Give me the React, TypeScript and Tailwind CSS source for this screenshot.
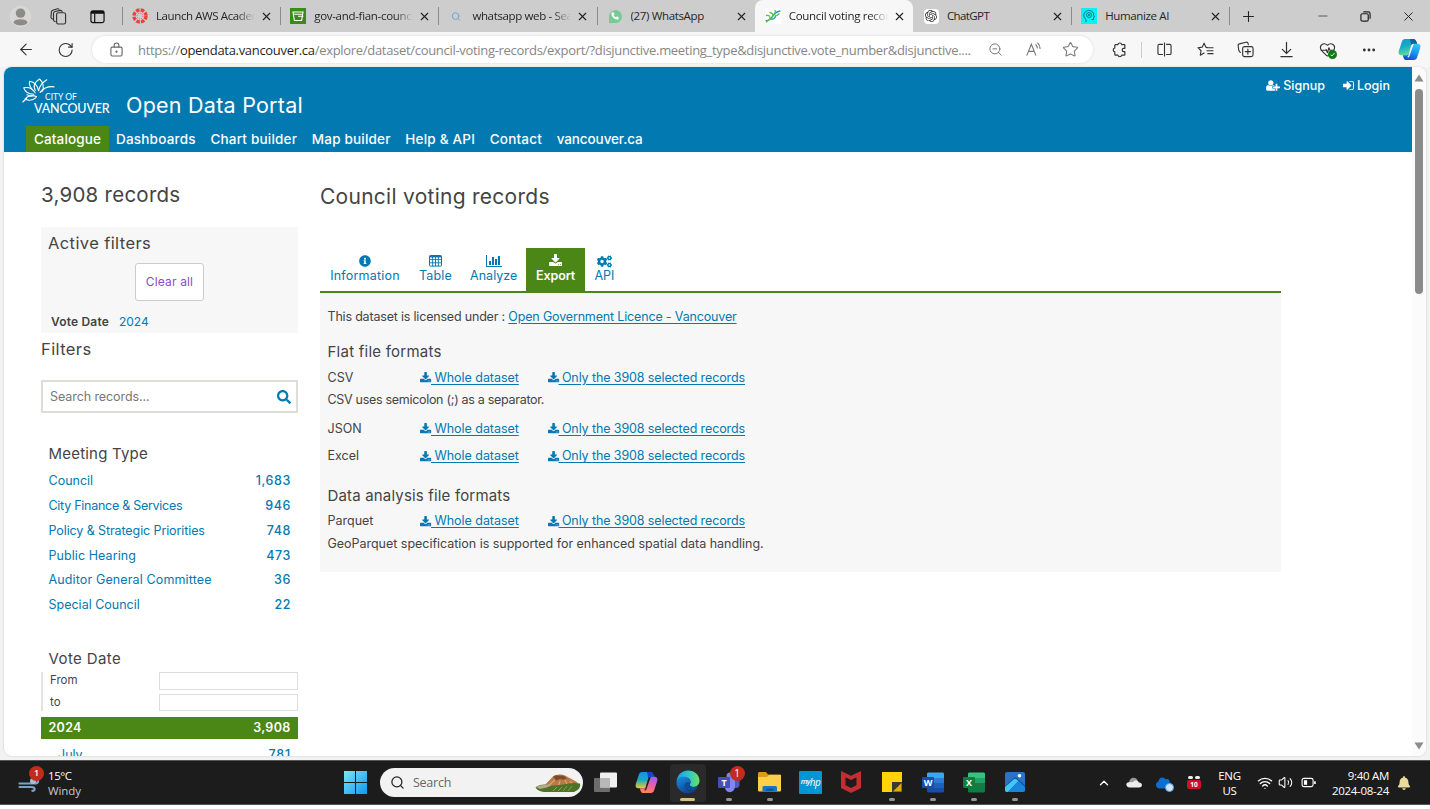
import React from "react";
import {
  ArrowLeft, RotateCw, X, Plus, Minus, ZoomOut, Star,
  Ellipsis, Search, Wifi, Volume2, ChevronUp, HeartPulse, Phone,
} from "lucide-react";
import { FaInfoCircle, FaCogs, FaSearch, FaBell, FaCloud } from "react-icons/fa";
import { SiOpenai } from "react-icons/si";

type Kids = { children?: React.ReactNode };

/* ---------- glyphs ---------- */

const DownloadGlyph = ({ className = "" }: { className?: string }) => (
  <svg viewBox="0 0 1792 1792" className={className} fill="currentColor">
    <path d="M1280 1344q0-26-19-45t-45-19-45 19-19 45 19 45 45 19 45-19 19-45zm256 0q0-26-19-45t-45-19-45 19-19 45 19 45 45 19 45-19 19-45zm128-224v320q0 40-28 68t-68 28h-1472q-40 0-68-28t-28-68v-320q0-40 28-68t68-28h465l135 136q58 56 136 56t136-56l136-136h464q40 0 68 28t28 68zm-325-569q17 41-14 70l-448 448q-18 19-45 19t-45-19l-448-448q-31-29-14-70 17-39 59-39h256v-448q0-26 19-45t45-19h256q26 0 45 19t19 45v448h256q42 0 59 39z" />
  </svg>
);
const UserPlusGlyph = () => (
  <svg viewBox="0 0 2048 1792" className="h-[13px] w-[14px]" fill="currentColor">
    <path d="M704 896q-159 0-271.5-112.5t-112.5-271.5 112.5-271.5 271.5-112.5 271.5 112.5 112.5 271.5-112.5 271.5-271.5 112.5zm960 128h352q13 0 22.5 9.5t9.5 22.5v192q0 13-9.5 22.5t-22.5 9.5h-352v352q0 13-9.5 22.5t-22.5 9.5h-192q-13 0-22.5-9.5t-9.5-22.5v-352h-352q-13 0-22.5-9.5t-9.5-22.5v-192q0-13 9.5-22.5t22.5-9.5h352v-352q0-13 9.5-22.5t22.5-9.5h192q13 0 22.5 9.5t9.5 22.5v352zm-736 224q0 52 38 90t90 38h256v238q-68 50-171 50h-874q-121 0-194-69t-73-190q0-53 3.5-103.5t14-109 26.5-108.5 43-97.5 62-81 85.5-53.5 111.5-20q19 0 39 17 79 61 154.5 91.5t164.5 30.5 164.5-30.5 154.5-91.5q20-17 39-17 132 0 217 96h-223q-52 0-90 38t-38 90v192z" />
  </svg>
);
const SignInGlyph = () => (
  <svg viewBox="0 128 1664 1536" className="h-[11px] w-[12px]" fill="currentColor">
    <path d="M1312 896q0 26-19 45l-544 544q-19 19-45 19t-45-19-19-45v-288h-448q-26 0-45-19t-19-45v-384q0-26 19-45t45-19h448v-288q0-26 19-45t45-19 45 19l544 544q19 19 19 45zm352-352v704q0 119-84.5 203.5t-203.5 84.5h-320q-13 0-22.5-9.5t-9.5-22.5q0-4-1-20t-.5-26.5 3-23.5 10-19.5 20.5-6.5h320q66 0 113-47t47-113v-704q0-66-47-113t-113-47h-312l-11.5-1-11.5-3-8-5.500-7-9-2-13.500q0-4-1-20t-.5-26.500 3-23.500 10-19.500 20.500-6.500h320q119 0 203.500 84.500t84.500 203.500z" />
  </svg>
);
const ChartGlyph = () => (
  <svg viewBox="0 0 2048 1792" className="h-[14px] w-[16px]" fill="currentColor">
    <path d="M640 896v512h-256v-512h256zm384-512v1024h-256v-1024h256zm1024 1152v128h-2048v-1536h128v1408h1920zm-640-896v768h-256v-768h256zm384-384v1152h-256v-1152h256z" />
  </svg>
);
const TableGlyph = () => (
  <svg viewBox="0 0 14 12" className="h-3 w-3.5" fill="none" stroke="currentColor">
    <rect x=".5" y=".5" width="12" height="10.6" rx=".8" />
    <path d="M.5 1.6h12" strokeWidth="1.6" />
    <path d="M.5 4.6h12M.5 7.8h12M3.6 1v10M6.5 1v10M9.4 1v10" strokeWidth=".9" />
  </svg>
);

const CityLogo = () => (
  <svg viewBox="0 0 34 26" className="h-[26px] w-[34px]" fill="none" stroke="#fff" strokeWidth="1.1" strokeLinecap="round" strokeLinejoin="round">
    <path d="M13.200 12.500C10.800 8 12.600 4 17.600 1c3.200 3 4.600 7 3 12.200" />
    <path d="M7.600 3.200c4.400.8 7.800 4.200 9 9.300M7.600 3.200c-.8 3.600.6 6.600 4 9.600" />
    <path d="M24.800 1.800c-4.600 2.800-7.400 6.200-8.200 11" />
    <path d="M1.800 9.800c4.600-1 8.800.8 11.400 5M1.800 9.800c1 3.800 4.400 6 10 6.400" />
    <path d="M32 8.800c-6-.6-10.400 1.200-13.800 5.600" strokeWidth="1.300" />
    <path d="M14.500 18.500c-4.600-1.600-8.800-.6-11.500 2.500 4 2 8 1.400 11-1.300M4.500 20.500.8 24M5 16.800l4.600 1.400" />
  </svg>
);

const CopilotGlyph = ({ warm = false }: { warm?: boolean }) => {
  const id = warm ? "w" : "c";
  return (
    <svg viewBox="0 0 24 24" className="size-[23px]">
      <defs>
        <linearGradient id={id + "a"} x1="0" y1="0" x2={warm ? "0" : ".3"} y2="1">
          <stop offset="0" stopColor="#1690e6" />
          <stop offset=".5" stopColor="#18acc2" />
          <stop offset="1" stopColor={warm ? "#f6c92b" : "#5fdc9c"} />
        </linearGradient>
        <linearGradient id={id + "b"} x1=".6" y1="0" x2=".3" y2="1">
          <stop offset="0" stopColor={warm ? "#a45cf0" : "#34c8ef"} />
          <stop offset=".5" stopColor={warm ? "#ee5fa5" : "#1694ec"} />
          <stop offset="1" stopColor={warm ? "#ff8a4a" : "#1646d6"} />
        </linearGradient>
      </defs>
      <path d="M7.500 1h8.500c1.600 0 2.500 1 3 2.500L20 6h-3.500c-1.500 0-2.300.8-2.800 2.400l-2 7C11 17.500 10 18 8.300 18H3.500C1 18 .2 16 .8 13.600L4 3.800C4.600 2 5.700 1 7.500 1Z" fill={`url(#${id}a)`} />
      <path d="M16.500 23H9c-1.800 0-2.700-1-3.200-2.500L5 18h3.300c1.700 0 2.700-.5 3.400-2.600l2-7C14.200 6.800 15 6 16.500 6h4c2.500 0 3.300 2 2.700 4.400L20 20.200c-.6 1.800-1.700 2.800-3.500 2.800Z" fill={`url(#${id}b)`} />
      <path d="M12.500 1H16c1.600 0 2.500 1 3 2.500L20 6h-3.500c-1.300 0-2 .5-2.600 1.800Z" fill={warm ? "#1746c4" : "#14619a"} />
      <path d="M12.800 11.500l.9-3.100C14.200 6.800 15 6 16.500 6l-4.800 13.500c-.5 1-1.500 1-2 .4 1-.8 1.600-2.400 2-4.500Z" fill={warm ? "#1c1c1c" : "#e9fbff"} />
    </svg>
  );
};

const EdgeGlyph = () => (
  <svg viewBox="0 0 24 24" className="size-[24px]">
    <defs>
      <linearGradient id="e1" x1="0" y1=".3" x2="1" y2=".3">
        <stop offset="0" stopColor="#1a9ee4" /><stop offset=".5" stopColor="#2bc3d2" /><stop offset="1" stopColor="#6be35a" />
      </linearGradient>
      <linearGradient id="e2" x1="0" y1="0" x2=".6" y2="1">
        <stop offset="0" stopColor="#1b8fe0" /><stop offset="1" stopColor="#0d3f8d" />
      </linearGradient>
    </defs>
    <path d="M.6 11C1.300 4.600 6.300.5 12 .5c6.700 0 11.500 4.700 11.500 10.300 0 3.600-2.700 6.200-6.200 6.200-3 0-4.500-1.200-3.600-2.400 2.300-3 .2-7-4.200-7C5.300 7.600 2 9 .6 11Z" fill="url(#e1)" />
    <path d="M.5 12C.8 8.500 4.500 6.400 8.500 6.800c4 .4 6.500 3.600 5.800 6.700-2-2-6-.8-5.600 3 .3 4 5.300 5.600 12.300 2.600-2 2.800-5.300 4.400-9 4.400C5.400 23.500.2 18.300.5 12Z" fill="url(#e2)" />
    <path d="M8.700 16.500c-.4-3.800 3.600-5 5.400-3-.6 2 .4 3.500 3.200 3.500 1.700 0 3.300-.6 4.400-1.600-.3 1.600-.7 2.600-1.300 3.500-6.500 3-11.400 1.600-11.700-2.400Z" fill="#0c4c9c" />
  </svg>
);

/* ---------- browser chrome ---------- */

type TabInfo = { title: string; icon: React.ReactNode; active?: boolean; noLine?: boolean; fade?: boolean; track?: string };

const tabs: TabInfo[] = [
  { title: "Launch AWS Academy", fade: true, track: "tracking-[-0.4px]",
    icon: <svg viewBox="0 0 16 16" className="size-4"><circle cx="8" cy="8" r="6" fill="none" stroke="#ee4135" strokeWidth="3.400" strokeDasharray="3.500 1.210" /><circle cx="8" cy="8" r="2.900" fill="none" stroke="#ee4135" strokeWidth=".9" strokeDasharray="1 1.270" /></svg> },
  { title: "gov-and-fian-council", fade: true, track: "tracking-[-0.3px]",
    icon: <svg viewBox="0 0 16 16" className="size-4"><path d="M0 0h16v16H0z" fill="#3c8a1c" /><path d="M3 4h10l-1.400 8.500H4.400L3 4Zm.4 2.200h9.200M8 8.300h5.300" fill="none" stroke="#fff" strokeWidth="1.100" /></svg> },
  { title: "whatsapp web - Search", fade: true, track: "tracking-[-0.36px]", icon: <Search className="mx-[3px] size-[11px] text-[#6ea6dc]" strokeWidth={2.4} /> },
  { title: "(27) WhatsApp", track: "tracking-[-0.35px]", icon: <div className="ml-0.5 flex size-[13px] items-center justify-center rounded-full rounded-bl-[3px] bg-[#76ca94] text-white"><Phone className="size-[8px] fill-white" /></div> },
  { title: "Council voting records", active: true, fade: true, track: "tracking-[-0.3px]",
    icon: <div className="flex size-4 items-center justify-center bg-white"><svg viewBox="0 0 16 14" className="h-3.5 w-4" fill="none" strokeWidth="1.300" strokeLinecap="round"><path d="M1 11.500c4 .5 5.500-2.500 7-5s3-3.500 7-4.500M6 10c2 .5 4-1 5-3.500" stroke="#1c9ce0" /><path d="M1.500 6.500c3-.6 4 1.200 3.600 3.500M5 3.500C7.500 4 8.500 5.500 7.500 8M10 1.500c1 2 .5 3.500-1.500 5M1.500 13l3-3M12 6.500l2-1.500" stroke="#5cc034" /></svg></div> },
  { title: "ChatGPT", noLine: true, track: "tracking-[-0.6px]", icon: <div className="ml-px flex size-[15px] items-center justify-center rounded-sm bg-white text-[#333]"><SiOpenai size={12} /></div> },
  { title: "Humanize AI", track: "tracking-[-0.35px]", icon: <svg viewBox="0 0 16 16" className="size-4"><path d="M0 0h16v16H0z" fill="#0af0f5" /><path d="M5 14v-2.500C2.500 9.500 2 6.500 4 4.200 6.500 1.500 11 2 12.500 5.200l.2 2.300.8 1.500-1 .5v2h-2" fill="none" stroke="#07757c" strokeWidth="1" /><circle cx="8" cy="7" r="2.500" fill="none" stroke="#07757c" strokeWidth=".9" /><circle cx="8" cy="7" r="1" fill="#07757c" /></svg> },
];

const BrowserTab = ({ title, icon, active, noLine, fade, track = "" }: TabInfo) => (
  <div className={"flex h-8 w-[158.2px] shrink-0 items-center " + (active ? "rounded-t-lg bg-[#f7f7f7]" : "")}>
    <div className={"h-[18px] w-px " + (active || noLine ? "" : "bg-[#8a8a8a]")} />
    <div className="ml-[9px] flex w-4 items-center">{icon}</div>
    <div className={"ml-2 w-[99px] overflow-hidden whitespace-nowrap text-[11.5px] leading-4 text-[#262626] " + track + (fade ? " [mask-image:linear-gradient(to_right,black_82%,transparent)]" : "")}>{title}</div>
    <X className="ml-[5px] size-[13px] text-[#222]" strokeWidth={2.1} />
  </div>
);

const TitleBar = () => (
  <div className="flex h-8 items-center bg-[#cdcdcd]">
    <div className="ml-[10px] flex w-[29px]">
      <svg viewBox="0 0 20 20" className="size-[21px]"><circle cx="10" cy="10" r="9.500" fill="#d9d6d2" stroke="#e6e4e2" strokeWidth=".6" /><circle cx="10" cy="6.800" r="4.500" fill="#8b8b8b" /><ellipse cx="10" cy="15.500" rx="6.500" ry="3" fill="#8b8b8b" /></svg>
    </div>
    <div className="flex w-[38px] justify-center">
      <svg viewBox="0 0 18 18" className="size-[17px]" fill="none" stroke="#333" strokeWidth="1.200"><rect x="7" y="5" width="9.500" height="12" rx="2" /><path d="M6 14.500 4.700 14c-.8-.3-1-.9-1-1.600V5.500C3.700 4.400 4.500 4 5.200 3.700L11 2.500c1 0 1.800.7 2 1.700M3 12 1.600 11c-.6-.5-.7-1-.6-1.600L1.500 4c.1-.8.8-1.300 1.400-1.600L8 .8c.8-.1 1.400.2 1.900.8" /></svg>
    </div>
    <div className="flex w-[40px] justify-center">
      <svg viewBox="0 0 16 16" className="size-[15px]" fill="none" stroke="#111" strokeWidth="1.300"><rect x="1" y="2" width="14" height="12.500" rx="2" /><path d="M1 3.600h14" strokeWidth="3" /><path d="M5 5v9" /></svg>
    </div>
    <div className="ml-[5px] flex">
      {tabs.map((t) => <BrowserTab key={t.title} {...t} />)}
    </div>
    <div className="h-[18px] w-px bg-[#8a8a8a]" />
    <Plus className="ml-[10px] size-[17px] text-[#222]" strokeWidth={1.5} />
    <div className="ml-auto flex items-center text-[#222]">
      <div className="flex w-[43px] justify-center"><Minus className="size-3.5 text-[#555]" strokeWidth={1.6} /></div>
      <div className="flex w-[42px] justify-center"><svg viewBox="0 0 12 12" className="size-[11px]" fill="none" stroke="#222" strokeWidth="1.300"><rect x="1" y="3" width="8" height="8" rx="1.500" /><path d="M3.500 1H9c1.200 0 2 .8 2 2v5.500" /></svg></div>
      <div className="flex w-[44px] justify-center"><X className="size-[15px]" strokeWidth={1.5} /></div>
    </div>
  </div>
);

const Cell = ({ children }: Kids) => <div className="flex w-[40.9px] shrink-0 items-center justify-center">{children}</div>;

const Toolbar = () => (
  <div className="flex h-[35px] items-center bg-[#f7f7f7] text-[#333]">
    <ArrowLeft className="ml-[16.500px] size-[19px]" strokeWidth={1.4} />
    <RotateCw className="ml-[22.500px] size-[18px]" strokeWidth={1.5} />
    <div className="ml-[17.500px] flex h-[27px] w-[1001px] shrink-0 items-center rounded-full bg-white shadow-[0_0_3px_rgba(0,0,0,0.12)]">
      <svg viewBox="0 0 14 16" className="ml-[17.500px] h-[15px] w-[13px]" fill="none" stroke="#666" strokeWidth="1.200"><rect x="1" y="5.500" width="12" height="9.500" rx="1.500" /><path d="M4.500 5.500V3.500a2.500 2.500 0 0 1 5 0v2" /><circle cx="7" cy="10.300" r=".6" fill="#666" /></svg>
      <div className="ml-[15.500px] w-[840px] shrink-0 whitespace-nowrap text-[13px] leading-5 tracking-[-0.305px] text-[#868686]">
        https://<span className="text-[#1f1f1f]">opendata.vancouver.ca</span>/explore/dataset/council-voting-records/export/?disjunctive.meeting_type&amp;disjunctive.vote_number&amp;disjunctive....
      </div>
      <ZoomOut className="ml-[9.500px] size-[15px] text-[#777]" strokeWidth={1.6} />
      <svg viewBox="0 0 18 16" className="ml-[22px] h-[15px] w-[17px]" fill="none" stroke="#777" strokeWidth="1.200" strokeLinecap="round"><path d="m2 14 4.700-11.500L11.400 14M3.600 10h6.200M11.500 3c1 .8 1.500 2 1.500 3.300M13.500 1.200C15 2.600 16 4.300 16 6.800" /></svg>
      <Star className="ml-[20px] size-[17px] text-[#777]" strokeWidth={1.500} />
    </div>
    <svg viewBox="0 0 18 18" className="ml-[18px] size-[17px]" fill="none" stroke="#333" strokeWidth="1.300" strokeLinejoin="round"><path d="M5 3.600h2.600a2.200 2.200 0 0 1 4.300 0h2.600c.5 0 .8.3.8.8v3.300h-1.200a1.800 1.800 0 0 0 0 3.600h1.200v3.200c0 .5-.3.800-.8.800h-2.600a2.200 2.200 0 0 1-4.300 0H5c-.5 0-.8-.3-.8-.8v-2.900a2.200 2.200 0 0 1 0-4.300V4.400c0-.5.3-.8.8-.8Z" /></svg>
    <div className="ml-[14px] h-4 w-px bg-[#ccc]" />
    <div className="ml-[1.500px] flex">
      <Cell><svg viewBox="0 0 16 16" className="size-[15px]" fill="none" stroke="#333" strokeWidth="1.200"><path d="M6.300 2.500H2.500c-.8 0-1.500.5-1.500 1.400v8c0 .9.700 1.400 1.500 1.400h3.800M9.700 2.500h3.800c.8 0 1.500.5 1.500 1.400v8c0 .9-.7 1.400-1.500 1.400H9.700M8 .5v15" /></svg></Cell>
      <Cell><svg viewBox="0 0 18 18" className="size-[17px]" fill="none" stroke="#333" strokeWidth="1.200" strokeLinecap="round" strokeLinejoin="round"><path d="M10.800 7 9.400 6.500 7.500 2.300 5.600 6.500 1 7.100l3.300 3.200-.8 4.700 4-2.200M11.500 7.200H17M10.500 10.300H17M11.500 13.400H17" /></svg></Cell>
      <Cell><svg viewBox="0 0 18 18" className="size-[17px]" fill="none" stroke="#333" strokeWidth="1.200" strokeLinecap="round" strokeLinejoin="round"><rect x="6" y="6" width="11" height="10.500" rx="2" /><path d="M11.500 8.500v5.500M8.800 11.200h5.500M3.600 12.200C2.400 11.500 2 10.500 1.800 9.500L1.200 5c-.2-1 .3-1.800 1.300-2L9.500 1.300c1.200-.2 2 .4 2.300 1.500l.2 1" /></svg></Cell>
      <Cell><svg viewBox="0 0 16 18" className="h-[17px] w-[15px]" fill="none" stroke="#333" strokeWidth="1.300" strokeLinecap="round"><path d="M8 1.500v11.500M3.500 8.800 8 13.200l4.500-4.400M2 16.500h12" /></svg></Cell>
      <Cell><div className="relative"><HeartPulse className="size-[17px]" strokeWidth={1.600} /><svg viewBox="0 0 10 10" className="absolute -bottom-[1px] -right-[1px] size-[9px]"><circle cx="5" cy="5" r="5" fill="#0f7b10" /><path d="m2.800 5.200 1.500 1.500 3-3.400" fill="none" stroke="#fff" /></svg></div></Cell>
      <Cell><Ellipsis className="size-4" strokeWidth={2.300} /></Cell>
      <Cell><CopilotGlyph /></Cell>
    </div>
  </div>
);

/* ---------- portal page ---------- */

const navItems = ["Dashboards", "Chart builder", "Map builder", "Help & API", "Contact", "vancouver.ca"];

const PortalHeader = () => (
  <div className="flex h-[85px] flex-col bg-[#0279b1] text-white">
    <div className="flex h-[59px] justify-between">
      <div className="flex pl-[18px] pt-[11px]">
        <div className="flex h-[37px] w-[90px] flex-col">
          <div className="flex h-[26px]">
            <CityLogo />
            <span className="-ml-[11px] mt-[14px] font-['Lato'] text-[8.500px] leading-[10px] tracking-[0px]">CITY OF</span>
          </div>
          <span className="ml-[12px] -mt-[2px] font-['Lato'] text-[12.500px] font-medium leading-[13px] tracking-[-0.15px]">VANCOUVER</span>
        </div>
        <span className="ml-[14px] mt-[14px] text-[21.500px] leading-[27px] tracking-[0.24px]">Open Data Portal</span>
      </div>
      <div className="flex h-5 items-center gap-[17px] pr-[22px] pt-[17px] text-[12.500px] font-medium leading-5">
        <span className="flex items-center gap-[3px]"><UserPlusGlyph />Signup</span>
        <span className="flex items-center gap-[3px]"><SignInGlyph />Login</span>
      </div>
    </div>
    <div className="flex h-[26px] items-stretch pl-[22px] text-[13.500px] font-medium leading-[26px] tracking-[0.2px]">
      <span className="w-[83px] bg-[#4b8717] text-center tracking-[0.15px]">Catalogue</span>
      <div className="ml-[7px] flex gap-[14.700px]">
        {navItems.map((n) => <span key={n} className={n === "vancouver.ca" ? "tracking-[-0.1px]" : ""}>{n}</span>)}
      </div>
    </div>
  </div>
);

const meetingTypes: [string, string, string][] = [
  ["Council", "1,683", ""],
  ["City Finance & Services", "946", "tracking-[-0.27px]"],
  ["Policy & Strategic Priorities", "748", "tracking-[-0.1px]"],
  ["Public Hearing", "473", "tracking-[0.07px]"],
  ["Auditor General Committee", "36", "tracking-[0.13px]"],
  ["Special Council", "22", ""],
];

const Sidebar = () => (
  <div className="ml-[37px] flex w-[257px] shrink-0 flex-col [&>*]:shrink-0">
    <div className="mt-[28.500px] text-[20.500px] leading-[28px] tracking-[0.25px]">3,908 records</div>
    <div className="mt-[18.500px] flex h-[106px] flex-col bg-[#f7f7f7]">
      <div className="mt-[5px] pl-[7px] text-[16.500px] leading-[22px] tracking-[0.4px]">Active filters</div>
      <button className="ml-[94px] mt-[9px] h-[38px] w-[69px] rounded-[3px] border border-[#ccc] bg-white text-[12px] tracking-[0.15px] text-[#8a4bd0]">Clear all</button>
      <div className="mt-[11px] flex gap-[10px] pl-[10px] text-[12px] leading-[20px]">
        <span className="font-semibold tracking-[0.18px]">Vote Date</span>
        <span className="text-[#0279b1]">2024</span>
      </div>
    </div>
    <div className="mt-[5px] text-[16.500px] leading-[22px] tracking-[0.4px]">Filters</div>
    <div className="mt-[20px] flex h-[33px] items-center justify-between border-2 border-[#dcdcd8] pl-[7px] pr-[5px]">
      <span className="mt-px text-[12.500px] tracking-[-0.08px] text-[#777]">Search records...</span>
      <FaSearch className="size-[14px] text-[#0279b1]" />
    </div>
    <div className="mt-[31px] pl-[7.500px] text-[15px] leading-[20px] tracking-[0.2px]">Meeting Type</div>
    <div className="mt-[5.500px] flex flex-col pl-[7.500px] pr-[7px] text-[12.500px] text-[#0279b1]">
      {meetingTypes.map(([name, n, track]) => (
        <div key={name} className="flex h-[24.7px] items-center justify-between">
          <span className={track}>{name}</span>
          <span className="font-medium tracking-[0.6px]">{n}</span>
        </div>
      ))}
    </div>
    <div className="mt-[31px] pl-[7.500px] text-[15px] leading-[20px] tracking-[0.4px]">Vote Date</div>
    <div className="mt-[3.500px] flex flex-col gap-[4px] border-l-2 border-[#e2e2e2] pl-[7px] text-[11.500px] leading-[17px]">
      <div className="flex justify-between"><span>From</span><div className="h-[18px] w-[139px] border border-[#ddd]" /></div>
      <div className="flex justify-between"><span>to</span><div className="h-[17px] w-[139px] border border-[#ddd]" /></div>
    </div>
    <div className="mt-[6px] flex h-[22px] items-center justify-between bg-[#4b8717] px-[7.500px] pt-px text-[12.500px] font-semibold tracking-[0.3px] text-white">
      <span>2024</span><span>3,908</span>
    </div>
    <div className="mt-[6.500px] flex justify-between pl-[17px] pr-[7px] text-[12.500px] leading-[18px] text-[#0279b1]">
      <span>July</span><span className="font-medium tracking-[0.8px]">781</span>
    </div>
  </div>
);

const FormatRow = ({ name }: { name: string }) => (
  <div className="flex h-[20px] items-center">
    <span className="w-[92.500px]">{name}</span>
    {["Whole dataset", "Only the 3908 selected records"].map((label, i) => (
      <a key={label} className={"flex items-center text-[#0279b1] " + (i === 0 ? "w-[127.500px] tracking-[-0.04px]" : "tracking-[-0.11px]")}>
        <DownloadGlyph className="size-[12px] shrink-0" />
        <span className="-ml-px whitespace-pre underline underline-offset-2">{" " + label}</span>
      </a>
    ))}
  </div>
);

const Main = () => (
  <div className="ml-[22px] flex w-[961px] flex-col">
    <div className="mt-[31px] text-[21px] leading-[28px] tracking-[0.27px]">Council voting records</div>
    <div className="mt-[37px] flex h-[45px] border-b-2 border-[#4b8717] text-[12.500px] leading-[16px] text-[#0279b1]">
      <div className="flex w-[90px] flex-col items-center pt-[6px]"><span className="flex h-[14px] items-center"><FaInfoCircle className="size-[12px]" /></span><span className="tracking-[0.2px]">Information</span></div>
      <div className="flex w-[51px] flex-col items-center pt-[6px]"><span className="flex h-[14px] items-center"><TableGlyph /></span><span className="tracking-[0.2px]">Table</span></div>
      <div className="flex w-[65.400px] flex-col items-center pt-[6px]"><span className="flex h-[14px] items-center"><ChartGlyph /></span><span>Analyze</span></div>
      <div className="flex w-[58.500px] flex-col items-center bg-[#4b8717] pt-[6px] font-semibold text-white"><span className="flex h-[14px] items-center"><DownloadGlyph className="size-[14px]" /></span><span className="tracking-[-0.1px]">Export</span></div>
      <div className="flex w-[39px] flex-col items-center pt-[6px]"><span className="flex h-[14px] items-center"><FaCogs className="size-[15px]" /></span><span>API</span></div>
    </div>
    <div className="flex h-[279px] flex-col bg-[#f7f7f7] pl-[7.500px] text-[12.500px]">
      <div className="mt-[14px] leading-[20px] tracking-[-0.19px]">This dataset is licensed under : <a className="tracking-[-0.16px] text-[#0279b1] underline underline-offset-2">Open Government Licence - Vancouver</a></div>
      <div className="mt-[15px] text-[15px] leading-[20px] tracking-[0.24px]">Flat file formats</div>
      <div className="mt-[6px]"><FormatRow name="CSV" /></div>
      <div className="mt-[2px] leading-[20px] tracking-[-0.3px]">CSV uses semicolon (;) as a separator.</div>
      <div className="mt-[9px]"><FormatRow name="JSON" /></div>
      <div className="mt-[7.500px]"><FormatRow name="Excel" /></div>
      <div className="mt-[19.500px] text-[15px] leading-[20px] tracking-[0.17px]">Data analysis file formats</div>
      <div className="mt-[5.500px]"><FormatRow name="Parquet" /></div>
      <div className="mt-[2.500px] leading-[20px] tracking-[-0.02px]">GeoParquet specification is supported for enhanced spatial data handling.</div>
    </div>
  </div>
);

const Scrollbar = () => (
  <div className="flex w-[14px] shrink-0 flex-col items-center bg-[#fbfbfb]">
    <svg viewBox="0 0 10 8" className="mt-[7px] h-2 w-[10px]"><path d="M5 .5 9.500 7.500h-9Z" fill="#8b8b8b" /></svg>
    <div className="mt-[7px] h-[205px] w-2 rounded-full bg-[#8b8b8b]" />
    <svg viewBox="0 0 10 8" className="mb-[6px] mt-auto h-2 w-[10px]"><path d="M5 7.500 9.500.5h-9Z" fill="#8b8b8b" /></svg>
  </div>
);

/* ---------- taskbar ---------- */

const AppCell = ({ children, dot, current }: Kids & { dot?: boolean; current?: boolean }) => (
  <div className="flex w-[40.900px] shrink-0 justify-center">
    <div className={"flex h-[38px] flex-col items-center " + (current ? "w-[36px] rounded bg-[#2a2a2a]" : "w-[36px]")}>
      <div className="mt-[6px] flex h-[25px] items-center justify-center">{children}</div>
      <div className={"mt-[3px] h-[3px] rounded-full " + (current ? "w-[15px] bg-[#d8bf83]" : dot ? "w-[6px] bg-[#979797]" : "w-[6px]")} />
    </div>
  </div>
);

const OfficeGlyph = ({ letter, a, b, c, d }: { letter: string; a: string; b: string; c: string; d: string }) => (
  <svg viewBox="0 0 22 21" className="h-[21px] w-[22px]">
    <path d="M5 2c0-1 .7-1.500 1.500-1.500h14c.9 0 1.500.6 1.500 1.500v4H5Z" fill={a} />
    <path d="M5 6h17v5H5Z" fill={b} /><path d="M5 11h17v5H5Z" fill={c} />
    <path d="M5 16h17v3c0 .9-.6 1.500-1.500 1.500h-14c-.8 0-1.500-.5-1.500-1.500Z" fill={d} />
    <rect y="5" width="12" height="11" rx="1" fill={d} />
    <text x="6" y="14" textAnchor="middle" fontFamily="Open Sans, sans-serif" fontWeight="700" fontSize="9" fill="#fff">{letter}</text>
  </svg>
);

const Taskbar = () => (
  <div className="flex h-[45px] items-center border-b border-t border-[#555] bg-[#1c1c1c] text-white">
    <div className="relative ml-[18px] w-[25px]">
      <svg viewBox="0 0 24 20" className="h-5 w-6" fill="none" stroke="#7ba0c6" strokeWidth="2.200" strokeLinecap="round"><path d="M1.500 10.500h15c4.500 0 4.500-4.500 1.500-4.500M1.500 14h12c4.500 0 3.500 4.500.8 3.800" /><circle cx="15" cy="8" r="3" fill="#a9bfd6" stroke="none" /></svg>
      <span className="absolute -top-[7px] left-[11px] flex size-[15px] items-center justify-center rounded-full bg-[#c42b1c] text-[9px] font-semibold">1</span>
    </div>
    <div className="ml-[5px] flex w-[296px] flex-col text-[11.500px] leading-[15px] tracking-[-0.45px]"><span>15°C</span><span className="tracking-[-0.1px] text-[#c8c8c8]">Windy</span></div>
    <svg viewBox="0 0 22 22" className="size-[23px]"><defs><linearGradient id="win" x1="0" y1="0" x2="1" y2="1"><stop offset="0" stopColor="#7be6fb" /><stop offset="1" stopColor="#1296f0" /></linearGradient></defs><path d="M0 0h10.500v10.500H0zM11.500 0H22v10.500H11.500zM0 11.500h10.500V22H0zM11.500 11.500H22V22H11.500z" fill="url(#win)" /></svg>
    <div className="ml-[13px] flex h-[29px] w-[203px] items-center rounded-full bg-[#f2f2f2]">
      <Search className="ml-[10px] size-[15px] text-[#222]" strokeWidth={2} />
      <span className="ml-[8px] mt-[1px] text-[12.500px] tracking-[-0.25px] text-[#666]">Search</span>
      <svg viewBox="0 0 46 20" className="ml-auto mr-[2px] h-5 w-[46px]"><path d="M8 14 18 3.500C20 1 27 .8 30 2.500L42 9l2 5-18 4Z" fill="#b97a45" /><path d="m18 4 2-1.500 9 .2 3 3-4 1-3-1-4 2-1-2Z" fill="#7b4c2b" /><path d="M20 7 12 14M25 8l-2 7M30 7l4 8M35 8l5 6" stroke="#dca56f" strokeWidth="1.200" fill="none" /><path d="M.5 14.500C8 8 16 14 24 12c8-1 14-3 21-1.500 1 4-2 7-6 8.500H9c-4-.4-7-2-8.500-4.500Z" fill="#4c7327" /><path d="M1 14c5-2 10-3 16-2-3 2-7 3-12 4Z" fill="#b9a888" /><path d="M18 18l4-4m1 4 4-4m1 4 4-5m1 5 4-5" stroke="#84a43c" strokeWidth="1" /></svg>
    </div>
    <div className="ml-[2.500px] flex">
      <AppCell><svg viewBox="0 0 23 21" className="h-[21px] w-[23px]"><rect y="6" width="16" height="14" rx="1" fill="#6d6d6d" /><rect x="6" y=".5" width="17" height="15" rx="1" fill="#f0f0f0" /><path d="M6 6h10v9.500H6z" fill="#b8b8b8" /></svg></AppCell>
      <AppCell><CopilotGlyph warm /></AppCell>
      <AppCell current><EdgeGlyph /></AppCell>
      <AppCell dot><div className="relative"><svg viewBox="0 0 22 21" className="h-[21px] w-[22px]"><circle cx="12" cy="4" r="3.500" fill="#7b83eb" /><path d="M12 7h9.500v6c0 3-4 4-6 2Z" fill="#5059c9" /><path d="M7 7h10v7c0 8-10 8-10 1Z" fill="#8087ee" /><rect y="5" width="12" height="11" rx="1" fill="#464eb8" /><text x="6" y="14" textAnchor="middle" fontFamily="Open Sans, sans-serif" fontWeight="700" fontSize="9" fill="#fff">T</text></svg><span className="absolute -top-[6px] left-[12px] flex size-[15px] items-center justify-center rounded-full bg-[#c42b1c] text-[10px]">1</span></div></AppCell>
      <AppCell dot><svg viewBox="0 0 23 20" className="h-5 w-[23px]"><path d="M0 1.500C0 .6.600 0 1.500 0H8l2 2.500h12c.6 0 1 .5 1 1V8H0Z" fill="#dc9c12" /><path d="M0 5h9l2-2h12v15c0 1-.6 1.500-1.500 1.500h-20C.6 19.500 0 19 0 18Z" fill="#fccf4b" /><path d="M4.500 19.500v-4c0-.8.7-1.500 1.500-1.500h11.500c.8 0 1.500.7 1.500 1.500v4Z" fill="#1477c6" /><path d="M8 16.500h7.500V19H8z" fill="#0b5a9d" /></svg></AppCell>
      <AppCell><div className="flex size-[23px] items-center justify-center rounded-[1px] bg-[#0096d6] text-[7.500px] font-semibold italic tracking-[-0.6px]">my<span className="text-[10px] font-normal">hp</span></div></AppCell>
      <AppCell><svg viewBox="0 0 20 22" className="h-[22px] w-5"><path d="M0 0 10 4.800 20 0v17l-10 5-10-5V0Zm4.500 6.200v8l5.500 2.900 5.500-2.900v-8L10 9Z" fill="#c42d31" /></svg></AppCell>
      <AppCell dot><svg viewBox="0 0 20 20" className="size-[20px]"><path d="M0 0h20v10l-10 10H0Z" fill="#ffd20a" /><path d="M10 10h10v10H10Z" fill="#3d3a2e" /><path d="M19.500 11 11 19.500h8.500Z" fill="#e5ac00" /></svg></AppCell>
      <AppCell dot><OfficeGlyph letter="W" a="#41a5ee" b="#2b7cd3" c="#1d61bd" d="#174fa8" /></AppCell>
      <AppCell dot><OfficeGlyph letter="X" a="#33c481" b="#21a366" c="#167a45" d="#107c41" /></AppCell>
      <AppCell dot><svg viewBox="0 0 20 20" className="size-[20px]"><rect width="20" height="20" rx="2" fill="#2c72c6" /><path d="M0 14 9 6c1-.8 2-.6 3 .3l8 7.200V18c0 1-1 2-2 2H2c-1 0-2-1-2-2Z" fill="#124fa0" /><path d="M0 15 8.500 7.500c1-.9 2.200-.9 3.200 0L13.500 9 3 20H2c-1 0-2-1-2-2Z" fill="#3fc8f4" /><path d="M3 20 13.500 9 20 15v3c0 1-1 2-2 2Z" fill="#1b85dc" /><circle cx="14.500" cy="3.800" r="1.800" fill="#fff" /></svg></AppCell>
    </div>
    <div className="ml-auto flex items-center">
      <ChevronUp className="size-[14px]" strokeWidth={2.200} />
      <svg viewBox="0 0 16 11" className="ml-[15px] h-[11px] w-[16px]"><path d="M3 8C2.500 3 5 .8 7.500.8c2.200 0 3.500 1.200 4 3L8 7Z" fill="#9a9a9a" /><path d="M4 10.500c-4.500 0-5-5-1-5.300L7 5c2-2 5-1.800 5.800.4C17 5.500 17 10.500 13 10.500Z" fill="#ececec" /></svg>
      <div className="relative ml-[14px]"><FaCloud className="size-[16px] text-[#0c6fce]" /><span className="absolute -bottom-[1px] -right-[2px] size-[9px] rounded-full border border-[#4f9fe6] bg-[#cfe6fa]" /></div>
      <div className="ml-[15px] flex w-[14px] flex-col items-center"><div className="flex h-[4px] gap-[2px]"><span className="h-[3px] w-[5px] rounded-full bg-[#eee]" /><span className="h-[3px] w-[5px] rounded-full bg-[#eee]" /></div><span className="h-[9px] w-[14px] rounded-[2px] bg-[#cf1027] text-center text-[6.500px] font-bold leading-[9px]">10</span></div>
      <div className="ml-[12.500px] flex w-[32px] flex-col items-center text-[11.500px] leading-[15px] tracking-[-0.35px]"><span>ENG</span><span>US</span></div>
      <Wifi className="ml-[11px] size-[16px]" strokeWidth={2} />
      <Volume2 className="ml-[5px] size-[15px]" strokeWidth={1.700} />
      <svg viewBox="0 0 16 12" className="ml-[8px] h-[11px] w-[15px]" fill="none" stroke="#fff" strokeWidth="1.200"><rect x="1" y="1.500" width="12" height="9" rx="2" /><path d="M15 4.500v3" strokeWidth="1.800" /><path d="M3 3.500h3.500v5H3z" fill="#fff" stroke="none" /></svg>
      <div className="ml-[8.500px] flex w-[65px] flex-col items-end whitespace-nowrap text-[11.500px] leading-[15px] tracking-[-0.3px]"><span>9:40 AM</span><span>2024-08-24</span></div>
      <FaBell className="ml-[8px] mr-[19px] size-[14px] text-[#eadb9d]" />
    </div>
  </div>
);

export default function App() {
  return (
    <div className="flex h-[809px] w-[1430px] flex-col overflow-hidden bg-white font-['Open_Sans','Noto_Sans',sans-serif]">
      <TitleBar />
      <Toolbar />
      <div className="flex h-[693px] bg-[#f2f2f2] pb-[4px] pl-1 pr-1">
        <div className="flex w-full overflow-hidden rounded-lg bg-white font-['Inter',sans-serif] text-[#444] shadow-[0_0_2px_rgba(0,0,0,0.2)]">
          <div className="flex w-[1408px] flex-col">
            <PortalHeader />
            <div className="flex h-[604px] overflow-hidden">
              <Sidebar />
              <Main />
            </div>
          </div>
          <Scrollbar />
        </div>
      </div>
      <Taskbar />
    </div>
  );
}
